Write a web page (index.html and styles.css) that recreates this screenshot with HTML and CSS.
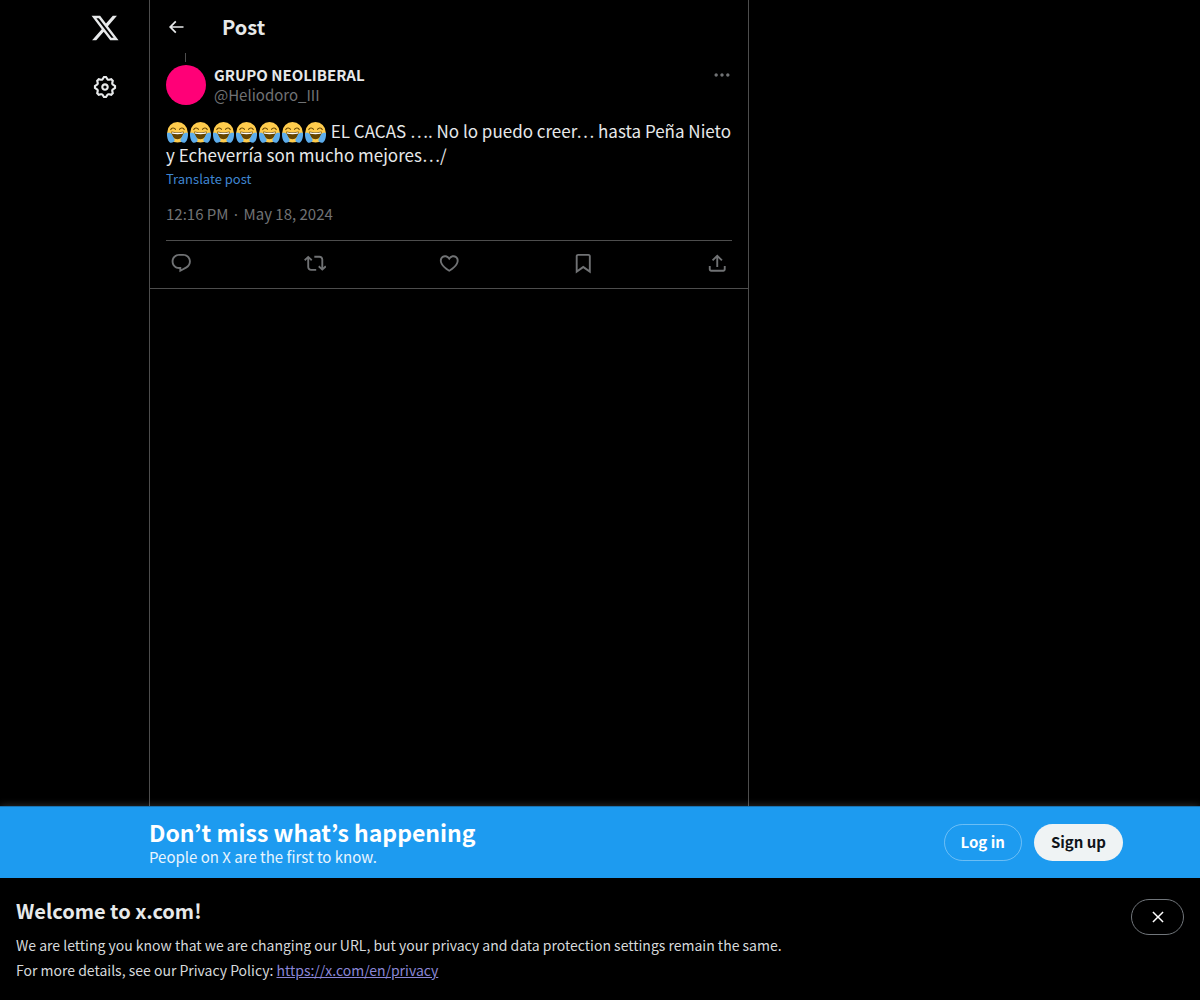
FILE: index.html
```html
<!DOCTYPE html>
<html lang="en">
<head>
<meta charset="UTF-8">
<title>GRUPO NEOLIBERAL on X</title>
<link rel="stylesheet" href="styles.css">
</head>
<body>
<svg class="sprite" width="0" height="0">
    <symbol id="icon-x" viewBox="0 0 24 24"><path d="M18.244 2.25h3.308l-7.227 8.26 8.502 11.24H16.17l-5.214-6.817L4.99 21.75H1.68l7.73-8.835L1.254 2.25H8.08l4.713 6.231zm-1.161 17.52h1.833L7.084 4.126H5.117z"/></symbol>
    <symbol id="icon-gear" viewBox="0 0 24 24"><path d="M10.54 1.75h2.92l1.57 2.36c.11.17.32.25.53.21l2.53-.59 2.17 2.17-.58 2.54c-.05.2.04.41.21.53l2.36 1.57v2.92l-2.36 1.57c-.17.12-.26.33-.21.53l.58 2.54-2.17 2.17-2.53-.59c-.21-.04-.42.04-.53.21l-1.57 2.36h-2.92l-1.58-2.36c-.11-.17-.32-.25-.52-.21l-2.54.59-2.17-2.17.58-2.54c.05-.2-.03-.41-.21-.53l-2.35-1.57v-2.92L4.1 8.97c.18-.12.26-.33.21-.53L3.73 5.9 5.9 3.73l2.54.59c.2.04.41-.04.52-.21l1.58-2.36zm1.07 2l-.98 1.47C10.05 6.08 9 6.5 7.99 6.27l-1.46-.34-.6.6.33 1.46c.24 1.01-.18 2.07-1.05 2.64l-1.46.98v.78l1.46.98c.87.57 1.29 1.63 1.05 2.64l-.33 1.46.6.6 1.46-.34c1.01-.23 2.06.19 2.64 1.05l.98 1.47h.78l.97-1.47c.58-.86 1.63-1.28 2.65-1.05l1.45.34.61-.6-.34-1.46c-.23-1.01.18-2.07 1.05-2.64l1.47-.98v-.78l-1.47-.98c-.87-.57-1.28-1.63-1.05-2.64l.34-1.46-.61-.6-1.45.34c-1.02.23-2.07-.19-2.65-1.05l-.97-1.47h-.78zM12 10.5c-.83 0-1.5.67-1.5 1.5s.67 1.5 1.5 1.5c.82 0 1.5-.67 1.5-1.5s-.68-1.5-1.5-1.5zM8.5 12c0-1.93 1.56-3.5 3.5-3.5 1.93 0 3.5 1.57 3.5 3.5s-1.57 3.5-3.5 3.5c-1.94 0-3.5-1.57-3.5-3.5z"/></symbol>
    <symbol id="icon-back" viewBox="0 0 24 24"><path d="M7.414 13l5.043 5.04-1.414 1.42L3.586 12l7.457-7.46 1.414 1.42L7.414 11H21v2H7.414z"/></symbol>
    <symbol id="icon-more" viewBox="0 0 24 24"><path d="M3 12c0-1.1.9-2 2-2s2 .9 2 2-.9 2-2 2-2-.9-2-2zm9 2c1.1 0 2-.9 2-2s-.9-2-2-2-2 .9-2 2 .9 2 2 2zm7 0c1.1 0 2-.9 2-2s-.9-2-2-2-2 .9-2 2 .9 2 2 2z"/></symbol>
    <symbol id="icon-reply" viewBox="0 0 24 24"><path d="M1.751 10c0-4.42 3.584-8 8.005-8h4.366c4.49 0 8.129 3.64 8.129 8.13 0 2.96-1.607 5.68-4.196 7.11l-8.054 4.46v-3.69h-.067c-4.49.1-8.183-3.51-8.183-8.01zm8.005-6c-3.317 0-6.005 2.69-6.005 6 0 3.37 2.77 6.08 6.138 6.01l.351-.01h1.761v2.3l5.087-2.81c1.951-1.08 3.163-3.13 3.163-5.36 0-3.39-2.744-6.13-6.129-6.13H9.756z"/></symbol>
    <symbol id="icon-repost" viewBox="0 0 24 24"><path d="M4.5 3.88l4.432 4.14-1.364 1.46L5.5 7.55V16c0 1.1.896 2 2 2H13v2H7.5c-2.209 0-4-1.79-4-4V7.55L1.432 9.48.068 8.02 4.5 3.88zM16.5 6H11V4h5.5c2.209 0 4 1.79 4 4v8.45l2.068-1.93 1.364 1.46-4.432 4.14-4.432-4.14 1.364-1.46 2.068 1.93V8c0-1.1-.896-2-2-2z"/></symbol>
    <symbol id="icon-like" viewBox="0 0 24 24"><path d="M16.697 5.5c-1.222-.06-2.679.51-3.89 2.16l-.805 1.09-.806-1.09C9.984 6.01 8.526 5.44 7.304 5.5c-1.243.07-2.349.78-2.91 1.91-.552 1.12-.633 2.78.479 4.82 1.074 1.97 3.257 4.27 7.129 6.61 3.87-2.34 6.052-4.64 7.126-6.61 1.111-2.04 1.03-3.7.477-4.82-.561-1.13-1.666-1.84-2.908-1.91zm4.187 7.69c-1.351 2.48-4.001 5.12-8.379 7.67l-.503.3-.504-.3c-4.379-2.55-7.029-5.19-8.382-7.67-1.36-2.5-1.41-4.86-.514-6.67.887-1.79 2.647-2.91 4.601-3.01 1.651-.09 3.368.56 4.798 2.01 1.429-1.45 3.146-2.1 4.796-2.01 1.954.1 3.714 1.22 4.601 3.01.896 1.81.846 4.17-.514 6.67z"/></symbol>
    <symbol id="icon-bookmark" viewBox="0 0 24 24"><path d="M4 4.5C4 3.12 5.119 2 6.5 2h11C18.881 2 20 3.12 20 4.5v18.44l-8-5.71-8 5.71V4.5zM6.5 4c-.276 0-.5.22-.5.5v14.56l6-4.29 6 4.29V4.5c0-.28-.224-.5-.5-.5h-11z"/></symbol>
    <symbol id="icon-share" viewBox="0 0 24 24"><path d="M12 2.59l5.7 5.7-1.41 1.42L13 6.41V16h-2V6.41l-3.3 3.3-1.41-1.42L12 2.59zM21 15l-.02 3.51c0 1.38-1.12 2.49-2.5 2.49H5.5C4.11 21 3 19.88 3 18.5V15h2v3.5c0 .28.22.5.5.5h12.98c.28 0 .5-.22.5-.5L19 15h2z"/></symbol>
    <symbol id="icon-close" viewBox="0 0 24 24"><path d="M10.59 12L4.54 5.96l1.42-1.42L12 10.59l6.04-6.05 1.42 1.42L13.41 12l6.05 6.04-1.42 1.42L12 13.41l-6.04 6.05-1.42-1.42L10.59 12z"/></symbol>
    <symbol id="emoji-joy" viewBox="0 0 36 36">
        <circle cx="18" cy="17.500" r="17.500" fill="#FFCC4D"/>
        <path d="M6.500 13c1.500-3.500 6-3.500 8 -.5M29.500 13c-1.500-3.500-6-3.500-8-.5" fill="none" stroke="#664500" stroke-width="2" stroke-linecap="round"/>
        <path d="M18 17.500c-4 0-7-.5-10.500-1.300 0 8 4.500 13.300 10.500 13.300s10.500-5.300 10.500-13.300c-3.500.8-6.500 1.300-10.500 1.300z" fill="#664500"/>
        <path d="M8.500 17.500c3 .6 6 .9 9.500 .9s6.500-.3 9.500-.9l-.4 2.800c-3 .6-6 .8-9.100 .8s-6.100-.2-9.100-.8z" fill="#fff"/>
        <path d="M0 19c3-1.500 7-.5 8.500 2.500s3.500 6 4.500 9c.8 3-2.500 5-6 5-4 0-7.500-7-7-16.500zM36 19c-3-1.500-7-.5-8.500 2.500s-3.500 6-4.500 9c-.8 3 2.500 5 6 5 4 0 7.500-7 7-16.500z" fill="#5DADEC"/>
    </symbol>
</svg>

<div class="page">
    <div class="columns">
        <nav class="sidebar">
            <svg class="logo"><use href="#icon-x"/></svg>
            <svg class="gear"><use href="#icon-gear"/></svg>
        </nav>
        <main class="timeline">
            <header class="top-bar">
                <svg class="back"><use href="#icon-back"/></svg>
                <h1 class="top-title">Post</h1>
            </header>
            <article class="post">
                <div class="thread-line"></div>
                <div class="author-row">
                    <div class="avatar"></div>
                    <div class="author">
                        <div class="author-name">GRUPO NEOLIBERAL</div>
                        <div class="author-handle">@Heliodoro_III</div>
                    </div>
                    <svg class="more"><use href="#icon-more"/></svg>
                </div>
                <div class="post-text">
                    <svg class="emoji"><use href="#emoji-joy"/></svg><svg class="emoji"><use href="#emoji-joy"/></svg><svg class="emoji"><use href="#emoji-joy"/></svg><svg class="emoji"><use href="#emoji-joy"/></svg><svg class="emoji"><use href="#emoji-joy"/></svg><svg class="emoji"><use href="#emoji-joy"/></svg><svg class="emoji"><use href="#emoji-joy"/></svg>
                    EL CACAS …. No lo puedo creer… hasta Peña Nieto y Echeverría son mucho mejores…/
                </div>
                <a class="translate" href="#">Translate post</a>
                <div class="post-time">12:16 PM<span class="dot">·</span>May 18, 2024</div>
                <div class="actions">
                    <svg class="action"><use href="#icon-reply"/></svg>
                    <svg class="action"><use href="#icon-repost"/></svg>
                    <svg class="action"><use href="#icon-like"/></svg>
                    <svg class="action"><use href="#icon-bookmark"/></svg>
                    <svg class="action"><use href="#icon-share"/></svg>
                </div>
            </article>
        </main>
    </div>

    <section class="signup-bar">
        <div class="signup-text">
            <div class="signup-title">Don’t miss what’s happening</div>
            <div class="signup-sub">People on X are the first to know.</div>
        </div>
        <div class="signup-buttons">
            <a class="btn btn-login" href="#">Log in</a>
            <a class="btn btn-signup" href="#">Sign up</a>
        </div>
    </section>

    <section class="notice">
        <div class="notice-body">
            <h2 class="notice-title">Welcome to x.com!</h2>
            <p class="notice-line">We are letting you know that we are changing our URL, but your privacy and data protection settings remain the same.</p>
            <p class="notice-line">For more details, see our Privacy Policy: <a class="notice-link" href="#">https://x.com/en/privacy</a></p>
        </div>
        <button class="notice-close"><svg class="close-icon"><use href="#icon-close"/></svg></button>
    </section>
</div>
</body>
</html>
```

FILE: styles.css
```css
* {
    box-sizing: border-box;
}
html, body {
    margin: 0;
    padding: 0;
    height: 100%;
}
body {
    background-color: #000;
    color: #e7e9ea;
    font-family: "Noto Sans CJK JP", "Noto Sans", sans-serif;
    overflow: hidden;
}
.sprite {
    display: block;
    height: 0;
}
svg {
    fill: currentColor;
    display: block;
}
.page {
    height: 1000px;
    display: flex;
    flex-direction: column;
}
.columns {
    flex: 1;
    display: flex;
    min-height: 0;
}

/* left rail */
.sidebar {
    width: 149px;
    padding: 13px 28px 0 0;
    display: flex;
    flex-direction: column;
    align-items: flex-end;
    color: #e7e9ea;
}
.logo {
    width: 30px;
    height: 30px;
    margin-right: 1px;
}
.gear {
    width: 26px;
    height: 26px;
    margin-top: 31px;
    margin-right: 3px;
}

/* middle column */
.timeline {
    width: 600px;
    border-left: 1px solid #4d4d4d;
    border-right: 1px solid #4d4d4d;
}
.top-bar {
    height: 53px;
    display: flex;
    align-items: center;
    padding-left: 16px;
}
.back {
    width: 20px;
    height: 20px;
}
.top-title {
    margin: 0 0 0 36px;
    font-size: 20px;
    font-weight: 700;
    line-height: 24px;
}
.post {
    padding: 0 16px;
    border-bottom: 1px solid #4d4d4d;
}
.thread-line {
    width: 1px;
    height: 9px;
    margin-left: 19px;
    background-color: #4d4d4d;
}
.author-row {
    display: flex;
    margin-top: 3px;
    height: 40px;
}
.avatar {
    width: 40px;
    height: 40px;
    border-radius: 50%;
    background-color: #ff0077;
}
.author {
    margin-left: 8px;
    flex: 1;
}
.author-name {
    font-size: 15px;
    font-weight: 700;
    line-height: 20px;
}
.author-handle {
    font-size: 15px;
    line-height: 20px;
    color: #707274;
}
.more {
    width: 20px;
    height: 20px;
    color: #707274;
}
.post-text {
    margin-top: 14px;
    font-size: 17px;
    line-height: 24px;
    color: #e7e9ea;
}
.emoji {
    display: inline-block;
    width: 21px;
    height: 21px;
    margin: 0 1px;
    vertical-align: -5px;
}
.translate {
    display: block;
    margin-top: 2px;
    font-size: 13px;
    line-height: 20px;
    color: #3f86d2;
    text-decoration: none;
}
.post-time {
    margin-top: 15px;
    font-size: 15px;
    line-height: 20px;
    color: #707274;
}
.dot {
    margin: 0 3.3px;
}
.actions {
    margin-top: 16px;
    height: 48px;
    border-top: 1px solid #4d4d4d;
    display: flex;
    justify-content: space-between;
    align-items: center;
    padding: 0 4px 2px;
    color: #707274;
}
.action {
    width: 22.5px;
    height: 22.5px;
}

/* blue sign up strip */
.signup-bar {
    height: 72px;
    flex-shrink: 0;
    background-color: #1d9bf0;
    border-top: 1px solid #1a74b3;
    box-shadow: 0 0 8px rgba(255, 255, 255, 0.2);
    display: flex;
    align-items: center;
    justify-content: space-between;
    padding: 0 77px 0 149px;
    color: #fff;
}
.signup-title {
    font-size: 23px;
    font-weight: 700;
    line-height: 28px;
    margin-top: -2px;
}
.signup-sub {
    font-size: 15px;
    line-height: 18px;
    margin-top: 2px;
    color: #e9f5fe;
}
.signup-buttons {
    display: flex;
    gap: 12px;
}
.btn {
    height: 37px;
    border-radius: 19px;
    padding: 0 16px 2px;
    display: flex;
    align-items: center;
    font-size: 15px;
    font-weight: 700;
    text-decoration: none;
}
.btn-login {
    color: #fff;
    border: 1px solid rgba(255, 255, 255, 0.35);
}
.btn-signup {
    color: #0f1419;
    background-color: #eff3f4;
    padding: 0 17px 2px;
}

/* url change notice */
.notice {
    height: 122px;
    flex-shrink: 0;
    background-color: #000;
    display: flex;
    justify-content: space-between;
    padding: 21px 16px 0;
}
.notice-title {
    margin: 0 0 10px;
    font-size: 20px;
    font-weight: 700;
    line-height: 24px;
}
.notice-line {
    margin: 0;
    font-size: 14px;
    line-height: 25px;
    color: #d6d9db;
}
.notice-link {
    color: #8a86d6;
}
.notice-close {
    width: 53px;
    height: 36px;
    border: 1px solid #71767b;
    border-radius: 18px;
    background: none;
    color: #fff;
    display: flex;
    align-items: center;
    justify-content: center;
    padding: 0;
}
.close-icon {
    width: 18px;
    height: 18px;
}
```
